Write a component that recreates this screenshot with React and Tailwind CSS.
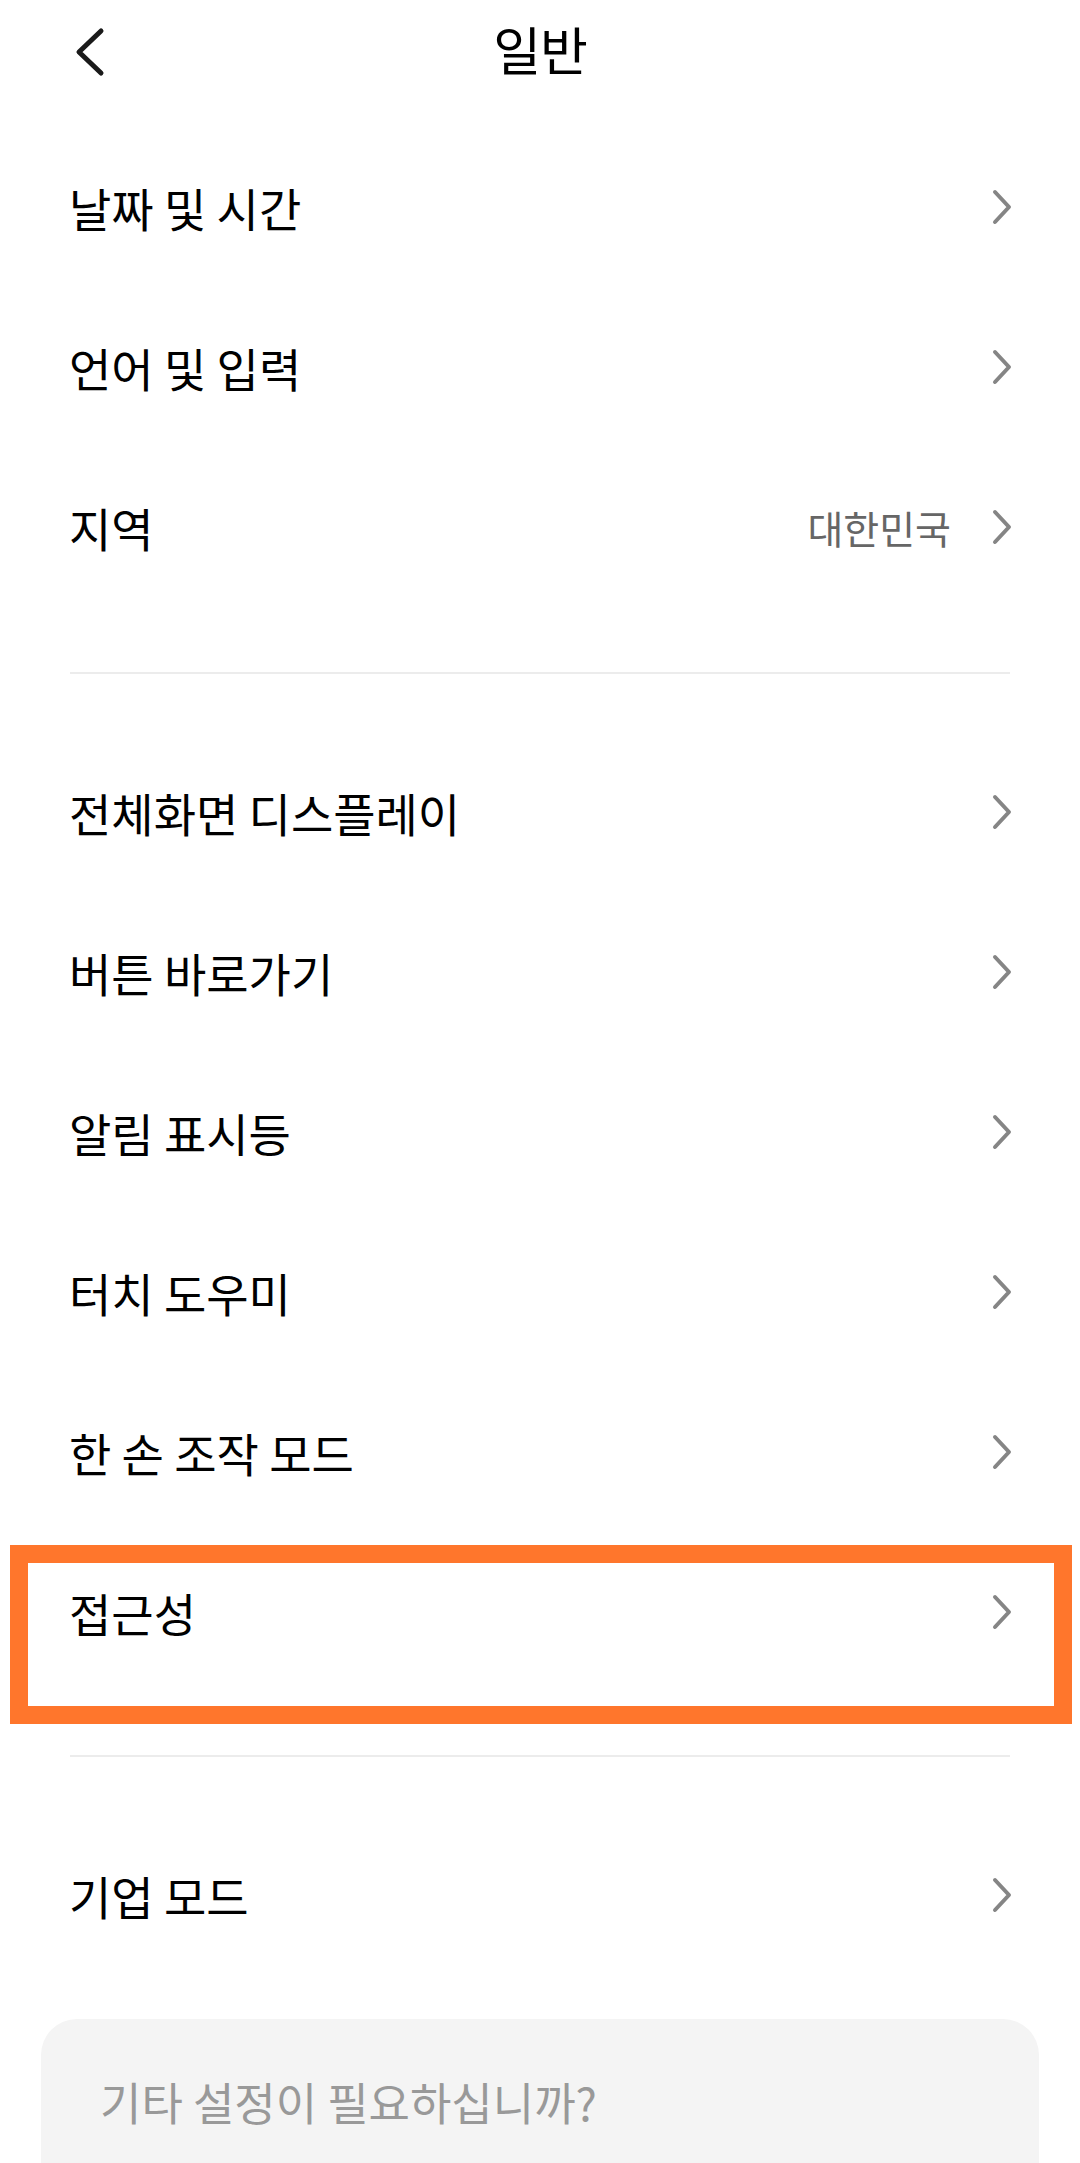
import React from 'react';

const Chevron = () => (
  <svg width="22" height="36" viewBox="0 0 22 36" className="shrink-0">
    <path d="M4 3 L18 18 L4 33" fill="none" stroke="#858585" strokeWidth="4" strokeLinecap="round" strokeLinejoin="round" />
  </svg>
);

const Row = ({ label, value }) => (
  <div className="h-[160px] flex items-center justify-between pl-[69px] pr-[67px] pb-[8px]">
    <span className="text-[46px] text-black leading-none">{label}</span>
    <div className="flex items-center gap-[40px]">
      {value && <span className="text-[39px] text-[#666666] leading-none">{value}</span>}
      <Chevron />
    </div>
  </div>
);

const Divider = () => <div className="mx-[70px] h-[2px] bg-[#ececec]" />;

const App = () => {
  return (
    <div
      className="w-[1080px] h-[2163px] overflow-hidden bg-white"
      style={{ fontFamily: '"Noto Sans CJK KR", "Noto Sans", sans-serif' }}
    >
      {/* Header */}
      <div className="h-[104px] flex items-center">
        <div className="pl-[72px]">
          <svg width="34" height="50" viewBox="0 0 34 50">
            <path d="M29 4 L7 25 L29 46" fill="none" stroke="#1a1a1a" strokeWidth="5" strokeLinecap="round" strokeLinejoin="round" />
          </svg>
        </div>
        <h1 className="flex-1 text-center text-[52px] text-black leading-none pr-[106px] pb-[6px] tracking-[-1px]">일반</h1>
      </div>

      <div className="pt-[27px]">
        <Row label="날짜 및 시간" />
        <Row label="언어 및 입력" />
        <Row label="지역" value="대한민국" />
      </div>

      <div className="pt-[61px]">
        <Divider />
      </div>

      <div className="pt-[62px]">
        <Row label="전체화면 디스플레이" />
        <Row label="버튼 바로가기" />
        <Row label="알림 표시등" />
        <Row label="터치 도우미" />
        <Row label="한 손 조작 모드" />
        <div className="relative">
          <Row label="접근성" />
          <div className="absolute top-[9px] left-[10px] right-[8px] h-[179px] border-[18px] border-[#ff762c] pointer-events-none" />
        </div>
      </div>

      <div className="pt-[59px]">
        <Divider />
      </div>

      <div className="pt-[62px]">
        <Row label="기업 모드" />
      </div>

      <div className="mt-[40px] mx-[41px] h-[300px] rounded-[36px] bg-[#f4f4f4] pt-[60px] pl-[59px]">
        <span className="text-[45px] text-[#999999] leading-none">기타 설정이 필요하십니까?</span>
      </div>
    </div>
  );
};

export default App;
